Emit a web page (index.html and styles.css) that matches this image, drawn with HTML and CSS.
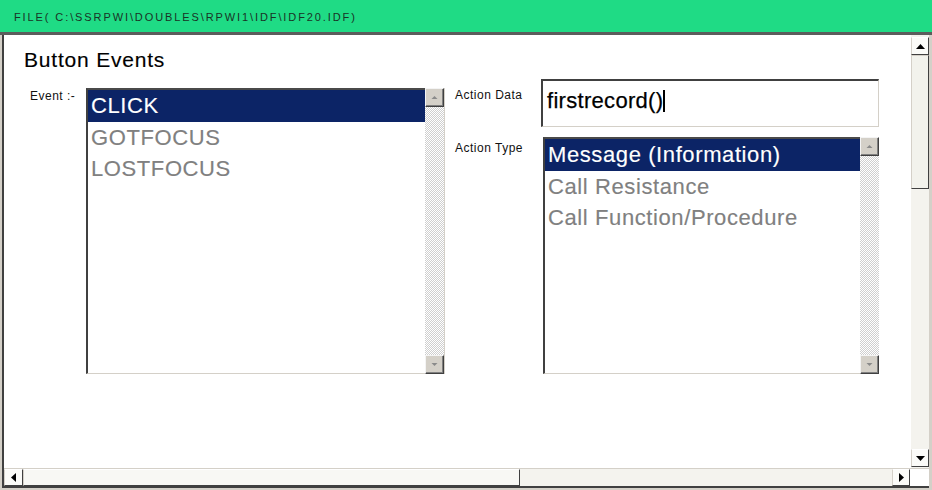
FILE: index.html
```html
<!DOCTYPE html>
<html lang="en">
<head>
<meta charset="utf-8">
<title>Button Events</title>
<link rel="stylesheet" href="styles.css">
</head>
<body>
<div class="window">
  <div class="titlebar">FILE( C:\SSRPWI\DOUBLES\RPWI1\IDF\IDF20.IDF)</div>
  <div class="frame">
    <div class="inner">
      <div class="main">
        <div class="canvas">
          <h1 class="heading">Button Events</h1>
          <div class="form">
            <div class="group-event">
              <span class="label label-event">Event :-</span>
              <div class="listbox listbox-event">
                <ul class="items">
                  <li class="item selected">CLICK</li>
                  <li class="item">GOTFOCUS</li>
                  <li class="item">LOSTFOCUS</li>
                </ul>
                <div class="lscroll">
                  <div class="lbtn"><svg width="7" height="5" viewBox="0 0 7 5"><polygon points="0.5,4 3.5,1 6.5,4" fill="#8a8a8a"/></svg></div>
                  <div class="ltrack"></div>
                  <div class="lbtn"><svg width="7" height="5" viewBox="0 0 7 5"><polygon points="0.5,1 3.5,4 6.5,1" fill="#8a8a8a"/></svg></div>
                </div>
              </div>
            </div>
            <div class="group-action">
              <span class="label label-data">Action Data</span>
              <div class="textbox"><span class="value">firstrecord()</span><span class="caret"></span></div>
              <span class="label label-type">Action Type</span>
              <div class="listbox listbox-type">
                <ul class="items">
                  <li class="item selected">Message (Information)</li>
                  <li class="item">Call Resistance</li>
                  <li class="item">Call Function/Procedure</li>
                </ul>
                <div class="lscroll">
                  <div class="lbtn"><svg width="7" height="5" viewBox="0 0 7 5"><polygon points="0.5,4 3.5,1 6.5,4" fill="#8a8a8a"/></svg></div>
                  <div class="ltrack"></div>
                  <div class="lbtn"><svg width="7" height="5" viewBox="0 0 7 5"><polygon points="0.5,1 3.5,4 6.5,1" fill="#8a8a8a"/></svg></div>
                </div>
              </div>
            </div>
          </div>
        </div>
        <div class="vscroll">
          <div class="sbtn"><svg width="9" height="5" viewBox="0 0 9 5"><polygon points="0,5 4.5,0 9,5" fill="#000"/></svg></div>
          <div class="vthumb"></div>
          <div class="vtrack"></div>
          <div class="sbtn"><svg width="9" height="5" viewBox="0 0 9 5"><polygon points="0,0 4.5,5 9,0" fill="#000"/></svg></div>
        </div>
      </div>
      <div class="hscroll">
        <div class="sbtn hbtn"><svg width="5" height="9" viewBox="0 0 5 9"><polygon points="5,0 0,4.5 5,9" fill="#000"/></svg></div>
        <div class="hthumb"></div>
        <div class="htrack"></div>
        <div class="sbtn hbtn hbtn-right"><svg width="5" height="9" viewBox="0 0 5 9"><polygon points="0,0 5,4.5 0,9" fill="#000"/></svg></div>
        <div class="corner"></div>
      </div>
    </div>
  </div>
</div>
</body>
</html>
```

FILE: styles.css
```css
* { box-sizing: border-box; }
html, body { margin: 0; padding: 0; }
body {
  font-family: "Liberation Sans", Arial, sans-serif;
  background: #d4d0c8;
}
.window {
  width: 932px;
  height: 490px;
  display: flex;
  flex-direction: column;
  background: #d4d0c8;
  overflow: hidden;
}
.titlebar {
  height: 32px;
  flex: none;
  background: #1fdb85;
  color: #1a3326;
  font-size: 11px;
  letter-spacing: 1.9px;
  line-height: 32px;
  padding: 1px 0 0 14px;
  white-space: nowrap;
}
.frame {
  flex: 1;
  border-top: 3px solid #5c5c5c;
  padding: 0 3px 2px 2px;
  display: flex;
}
.inner {
  flex: 1;
  display: flex;
  flex-direction: column;
  border-left: 2px solid #404040;
  border-bottom: 2px solid #404040;
}
.main {
  flex: 1;
  display: flex;
  min-height: 0;
}
.canvas {
  flex: 1;
  background: #fff;
  padding: 13px 0 0 0;
}
.heading {
  margin: 0 0 7px 20px;
  font-size: 21px;
  line-height: 24px;
  font-weight: normal;
  letter-spacing: 0.8px;
  color: #000;
  -webkit-text-stroke: 0.15px #000;
}
.form {
  display: flex;
  align-items: flex-start;
  padding-left: 26px;
}
.group-event {
  display: flex;
  align-items: flex-start;
}
.label {
  font-size: 12px;
  line-height: 14px;
  letter-spacing: 0.5px;
  color: #111;
  white-space: nowrap;
}
.label-event {
  width: 56px;
  margin-top: 10px;
}
.listbox {
  display: flex;
  background: #fff;
}
.listbox-event {
  width: 359px;
  height: 286px;
  margin-top: 9px;
  border-right: 1px solid #d4d0c8;
}
.items {
  flex: 1;
  list-style: none;
  margin: 0;
  padding: 0;
  border-top: 2px solid #4a4a4a;
  border-left: 2px solid #404040;
  border-bottom: 1px solid #d4d0c8;
}
.item {
  font-size: 22px;
  line-height: 31.5px;
  height: 31.5px;
  letter-spacing: 0.6px;
  padding-left: 3px;
  color: #808080;
  white-space: nowrap;
  -webkit-text-stroke: 0.15px currentColor;
}
.item.selected {
  background: #0c2466;
  color: #fff;
}
.lscroll {
  width: 19px;
  flex: none;
  display: flex;
  flex-direction: column;
}
.lbtn {
  height: 19px;
  flex: none;
  background: #d4d0c8;
  border-style: solid;
  border-width: 1px;
  border-color: #f4f4f4 #404040 #404040 #f4f4f4;
  box-shadow: inset -1px -1px 0 #808080;
  display: flex;
  align-items: center;
  justify-content: center;
}
.ltrack {
  flex: 1;
  background-color: #fff;
  background-image: conic-gradient(#cfcfcf 25%, #fff 0 50%, #cfcfcf 0 75%, #fff 0);
  background-size: 2px 2px;
}
.group-action {
  margin-left: 10px;
  display: grid;
  grid-template-columns: 86px 338px;
  align-items: start;
}
.label-data { margin-top: 9px; }
.label-type { margin-top: 14px; }
.textbox {
  height: 48px;
  border-top: 2px solid #404040;
  border-left: 2px solid #404040;
  border-bottom: 1px solid #d4d0c8;
  border-right: 1px solid #d4d0c8;
  padding: 7px 0 0 4px;
  font-size: 22px;
  line-height: 26px;
  letter-spacing: 0.3px;
  color: #000;
  display: flex;
  align-items: flex-start;
  -webkit-text-stroke: 0.25px #000;
}
.caret {
  width: 2px;
  height: 22px;
  margin-top: 2px;
  background: #000;
}
.listbox-type {
  width: 336px;
  height: 237px;
  margin: 10px 0 0 2px;
}
.vscroll {
  width: 18px;
  flex: none;
  display: flex;
  flex-direction: column;
  padding: 2px 0 1px;
  background: #f4f3ee;
}
.sbtn {
  height: 18px;
  flex: none;
  background: #fbfbf8;
  border-style: solid;
  border-width: 1px;
  border-color: #fff #404040 #404040 #d4d0c8;
  display: flex;
  align-items: center;
  justify-content: center;
}
.vthumb {
  height: 134px;
  flex: none;
  background: #f2f2ec;
  border-style: solid;
  border-width: 1px;
  border-color: #d4d0c8 #404040 #404040 #d4d0c8;
}
.vtrack { flex: 1; background: #f4f3ee; }
.hscroll {
  height: 18px;
  flex: none;
  display: flex;
  background: #f4f3ee;
  border-top: 1px solid #d4d0c8;
}
.hbtn {
  width: 19px;
  height: 17px;
}
.hbtn-right { width: 18px; }
.hthumb {
  width: 497px;
  flex: none;
  background: #f8f8f4;
  border-style: solid;
  border-width: 1px;
  border-color: #fff #404040 #404040 #d4d0c8;
}
.htrack { flex: 1; background: #f4f3ee; }
.corner { width: 19px; flex: none; background: #fff; }
```
